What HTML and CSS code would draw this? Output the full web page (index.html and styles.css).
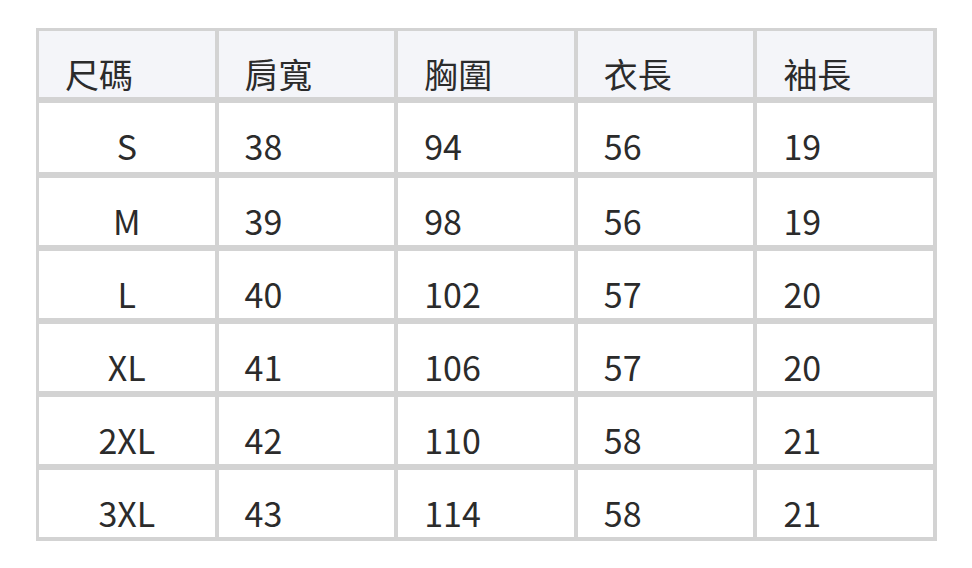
FILE: index.html
```html
<!DOCTYPE html>
<html lang="zh-Hant">
<head>
<meta charset="utf-8">
<title>尺碼表</title>
<link rel="stylesheet" href="styles.css">
</head>
<body>
<div class="wrap">
<table class="size-table">
  <thead>
    <tr><th>尺碼</th><th>肩寬</th><th>胸圍</th><th>衣長</th><th>袖長</th></tr>
  </thead>
  <tbody>
    <tr><td class="size">S</td><td>38</td><td>94</td><td>56</td><td>19</td></tr>
    <tr><td class="size">M</td><td>39</td><td>98</td><td>56</td><td>19</td></tr>
    <tr><td class="size">L</td><td>40</td><td>102</td><td>57</td><td>20</td></tr>
    <tr><td class="size">XL</td><td>41</td><td>106</td><td>57</td><td>20</td></tr>
    <tr><td class="size">2XL</td><td>42</td><td>110</td><td>58</td><td>21</td></tr>
    <tr><td class="size">3XL</td><td>43</td><td>114</td><td>58</td><td>21</td></tr>
  </tbody>
</table>
</div>
</body>
</html>
```

FILE: styles.css
```css
html, body {
  margin: 0;
  padding: 0;
  background: #ffffff;
}

.wrap {
  padding: 28px 0 0 36px;
}

.size-table {
  box-sizing: border-box;
  width: 901px;
  table-layout: fixed;
  border-collapse: separate;
  border-spacing: 0;
  border-left: 3px solid #d3d3d3;
  border-top: 3px solid #d3d3d3;
  font-family: "Noto Sans CJK TC", "Noto Sans", sans-serif;
  font-size: 34px;
  font-weight: 400;
  color: #2b2b2b;
}

.size-table th,
.size-table td {
  border-right: 4px solid #d3d3d3;
  border-bottom: 6px solid #d3d3d3;
  padding: 19px 0 1px 26px;
  line-height: 47px;
  text-align: left;
  vertical-align: top;
  white-space: nowrap;
}

.size-table th {
  font-weight: 400;
  background: #f4f5f9;
  padding-bottom: 0;
}

.size-table tbody tr:first-child td {
  padding-bottom: 3px;
}

.size-table tbody tr:last-child td {
  border-bottom-width: 4px;
}

.size-table td.size {
  text-align: center;
  padding-left: 0;
}
```
